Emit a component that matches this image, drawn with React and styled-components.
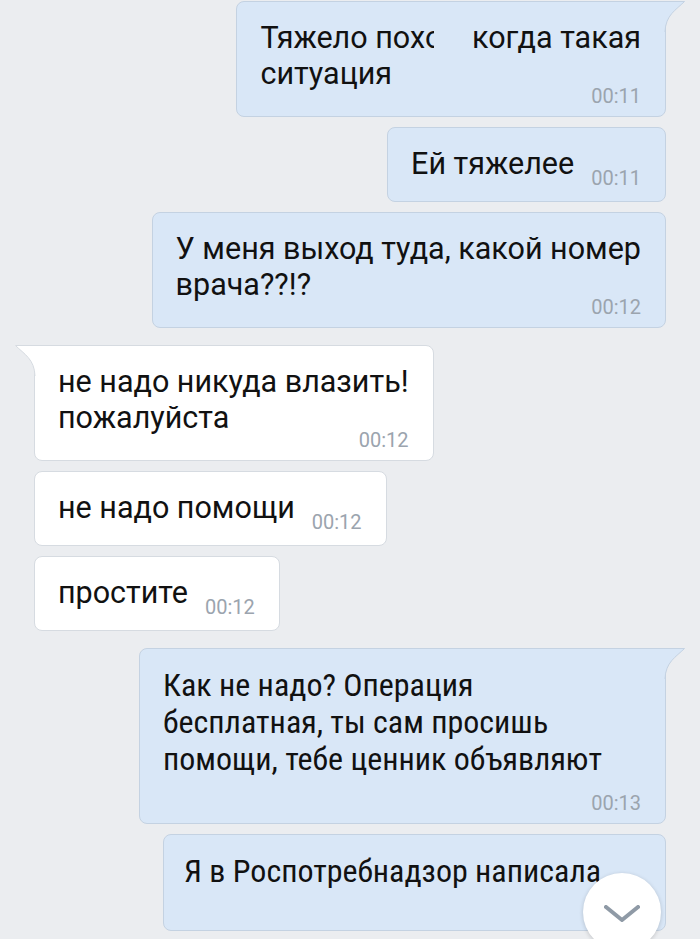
import React from "react";
import styled, { createGlobalStyle, css } from "styled-components";

const Global = createGlobalStyle`
  html, body {
    margin: 0;
    padding: 0;
    background: #ebedf0;
    overflow: hidden;
    font-family: Roboto, "Noto Sans", sans-serif;
  }
`;

const Feed = styled.div`
  display: flex;
  flex-direction: column;
  padding: 1px 34px 0;
  height: 939px;
  box-sizing: border-box;
`;

const Row = styled.div`
  display: flex;
  justify-content: ${(p) => (p.out ? "flex-end" : "flex-start")};
  margin-top: ${(p) => (p.first ? "0" : p.group ? "17px" : "10px")};
`;

const Bubble = styled.div`
  position: relative;
  box-sizing: border-box;
  width: ${(p) => (p.width ? `${p.width}px` : "auto")};
  background: ${(p) => (p.out ? "#d9e7f7" : "#ffffff")};
  border: 1px solid ${(p) => (p.out ? "#c4d2e2" : "#d6dbe1")};
  border-radius: 8px;
  padding: 18px 24px ${(p) => (p.multi ? "10px" : "19px")}
    ${(p) => p.padLeft || 23}px;
  color: #111;
  display: flex;
  flex-direction: ${(p) => (p.multi ? "column" : "row")};
  align-items: ${(p) => (p.multi ? "stretch" : "flex-end")};
  ${(p) =>
    p.tail &&
    (p.out
      ? css`
          border-top-right-radius: 0;
        `
      : css`
          border-top-left-radius: 0;
        `)}
`;

const Text = styled.div`
  font-size: 30.5px;
  line-height: 36px;
  white-space: nowrap;
  ${(p) =>
    p.narrow &&
    css`
      font-size: 32px;
      line-height: 37px;
      font-stretch: 85%;
    `}
`;

const Time = styled.div`
  font-size: 20px;
  line-height: 20px;
  color: #9ba4ae;
  white-space: nowrap;
  ${(p) =>
    p.block
      ? css`
          align-self: flex-end;
          margin-top: ${p.lift}px;
        `
      : css`
          margin-left: 17px;
          margin-bottom: -6px;
        `}
`;

/* the reference hides part of the first message behind a blank patch */
const Censor = styled.span`
  display: inline-block;
  width: 9px;
  overflow: hidden;
  vertical-align: bottom;
  margin-right: 38px;
`;

const TailSvg = styled.svg`
  position: absolute;
  top: -1px;
  ${(p) => (p.out ? "right: -21px;" : "left: -21px;")}
  width: 22px;
  height: 32px;
  overflow: visible;
`;

const Tail = ({ out }) => {
  const fill = out ? "#d9e7f7" : "#ffffff";
  const stroke = out ? "#c4d2e2" : "#d6dbe1";
  const shape = out
    ? "M0 0 L21 0 C12 9 2 14 1 31 L0 32 Z"
    : "M22 0 L1 0 C10 9 20 14 21 31 L22 32 Z";
  const edge = out
    ? "M0 0.5 L20.5 0.5 C12 9 1.5 14 1 31"
    : "M22 0.5 L1.5 0.5 C10 9 20.5 14 21 31";
  return (
    <TailSvg out={out} viewBox="0 0 22 32">
      <path d={shape} fill={fill} />
      <path d={edge} fill="none" stroke={stroke} strokeWidth="1" />
    </TailSvg>
  );
};

const ScrollButton = styled.div`
  position: fixed;
  left: 583px;
  top: 873px;
  width: 78px;
  height: 78px;
  border-radius: 50%;
  background: #ffffff;
  box-shadow: 0 1px 4px rgba(0, 0, 0, 0.18);
  display: flex;
  justify-content: center;
`;

const Chevron = styled.svg`
  width: 36px;
  height: 18px;
  margin-top: 32px;
`;

const Message = ({
  out,
  tail,
  multi,
  lift = -6,
  time,
  children,
  narrow,
  padLeft,
  width,
}) => (
  <Bubble out={out} tail={tail} multi={multi} padLeft={padLeft} width={width}>
    {tail && <Tail out={out} />}
    <Text narrow={narrow}>{children}</Text>
    <Time block={multi} lift={lift}>
      {time}
    </Time>
  </Bubble>
);

const App = () => (
  <>
    <Global />
    <Feed>
      <Row out first>
        <Message out tail multi time="00:11">
          Тяжело пох<Censor>о</Censor>когда такая
          <br />
          ситуация
        </Message>
      </Row>
      <Row out>
        <Message out time="00:11">
          Ей тяжелее
        </Message>
      </Row>
      <Row out>
        <Message out multi time="00:12">
          У меня выход туда, какой номер
          <br />
          врача??!?
        </Message>
      </Row>
      <Row group>
        <Message tail multi time="00:12">
          не надо никуда влазить!
          <br />
          пожалуйста
        </Message>
      </Row>
      <Row>
        <Message time="00:12">не надо помощи</Message>
      </Row>
      <Row>
        <Message time="00:12">простите</Message>
      </Row>
      <Row out group>
        <Message out tail multi narrow lift={15} width={527} time="00:13">
          Как не надо? Операция
          <br />
          бесплатная, ты сам просишь
          <br />
          помощи, тебе ценник объявляют
        </Message>
      </Row>
      <Row out>
        <Message out multi narrow lift={10} width={503} padLeft={20} time="00:13">
          Я в Роспотребнадзор написала
        </Message>
      </Row>
    </Feed>
    <ScrollButton>
      <Chevron viewBox="0 0 36 18">
        <path
          d="M2 2 L18 15 L34 2"
          fill="none"
          stroke="#8f9aa6"
          strokeWidth="4"
          strokeLinecap="round"
          strokeLinejoin="round"
        />
      </Chevron>
    </ScrollButton>
  </>
);

export default App;
